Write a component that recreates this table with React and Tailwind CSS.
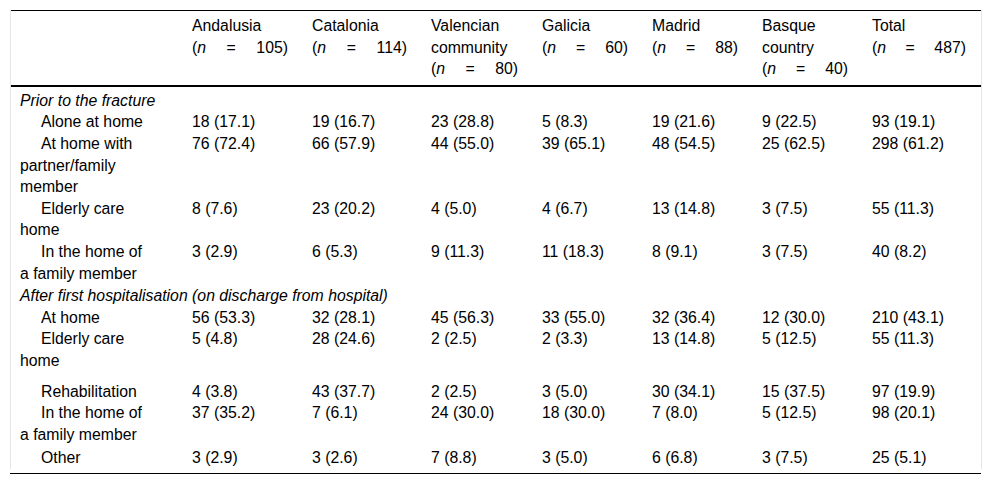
import React from 'react';

const cols = [
  { name: ['Andalusia'], n: '105' },
  { name: ['Catalonia'], n: '114' },
  { name: ['Valencian', 'community'], n: '80' },
  { name: ['Galicia'], n: '60' },
  { name: ['Madrid'], n: '88' },
  { name: ['Basque', 'country'], n: '40' },
  { name: ['Total'], n: '487' },
];

const sections = [
  {
    title: 'Prior to the fracture',
    pad: 'pt-[3px]',
    rows: [
      ['Alone at home', '18 (17.1)', '19 (16.7)', '23 (28.8)', '5 (8.3)', '19 (21.6)', '9 (22.5)', '93 (19.1)'],
      ['At home with partner/family member', '76 (72.4)', '66 (57.9)', '44 (55.0)', '39 (65.1)', '48 (54.5)', '25 (62.5)', '298 (61.2)'],
      ['Elderly care home', '8 (7.6)', '23 (20.2)', '4 (5.0)', '4 (6.7)', '13 (14.8)', '3 (7.5)', '55 (11.3)'],
      ['In the home of a family member', '3 (2.9)', '6 (5.3)', '9 (11.3)', '11 (18.3)', '8 (9.1)', '3 (7.5)', '40 (8.2)'],
    ],
  },
  {
    title: 'After first hospitalisation (on discharge from hospital)',
    pad: 'pt-px',
    rows: [
      ['At home', '56 (53.3)', '32 (28.1)', '45 (56.3)', '33 (55.0)', '32 (36.4)', '12 (30.0)', '210 (43.1)'],
      ['Elderly care home', '5 (4.8)', '28 (24.6)', '2 (2.5)', '2 (3.3)', '13 (14.8)', '5 (12.5)', '55 (11.3)', 'pb-[9px]'],
      ['Rehabilitation', '4 (3.8)', '43 (37.7)', '2 (2.5)', '3 (5.0)', '30 (34.1)', '15 (37.5)', '97 (19.9)'],
      ['In the home of a family member', '37 (35.2)', '7 (6.1)', '24 (30.0)', '18 (30.0)', '7 (8.0)', '5 (12.5)', '98 (20.1)', 'pb-[2px]'],
      ['Other', '3 (2.9)', '3 (2.6)', '7 (8.8)', '3 (5.0)', '6 (6.8)', '3 (7.5)', '25 (5.1)'],
    ],
  },
];

const widths = [172, 120, 119, 111, 110, 110, 110, 118];

export default function App() {
  return (
    <div className="min-h-screen bg-white pt-[10px] text-black" style={{ fontFamily: '"Liberation Sans", Arial, sans-serif' }}>
      <div className="mx-[10px] border-x border-[#e6e6e6]">
        <table className="w-[970px] table-fixed border-collapse text-[15.8px] leading-[21.6px]">
          <colgroup>
            {widths.map((w, i) => (
              <col key={i} style={{ width: w }} />
            ))}
          </colgroup>
          <thead>
            <tr className="border-t border-black border-b-2">
              <th className="pl-[9px] pt-[4px] pb-[5px]"></th>
              {cols.map((c, i) => (
                <th key={i} className="pl-[9px] pr-[15px] pt-[4px] pb-[5px] text-left align-top font-normal">
                  {c.name.map((l) => (
                    <div key={l}>{l}</div>
                  ))}
                  <div className="flex justify-between">
                    <span>(<i>n</i></span>
                    <span>=</span>
                    <span>{c.n})</span>
                  </div>
                </th>
              ))}
            </tr>
          </thead>
          <tbody>
            {sections.map((s) => (
              <React.Fragment key={s.title}>
                <tr>
                  <td colSpan={8} className={`pl-[9px] italic ${s.pad}`}>{s.title}</td>
                </tr>
                {s.rows.map((r) => (
                  <tr key={r[0]}>
                    <td className={`pl-[9px] align-top ${r[8] || ''}`}>
                      <div className="w-[125px] indent-[21px]">{r[0]}</div>
                    </td>
                    {r.slice(1, 8).map((v, i) => (
                      <td key={i} className="pl-[9px] align-top">{v}</td>
                    ))}
                  </tr>
                ))}
              </React.Fragment>
            ))}
          </tbody>
        </table>
      </div>
      <div className="mx-[10px] mt-[4px] h-px w-[971px] bg-black"></div>
    </div>
  );
}
